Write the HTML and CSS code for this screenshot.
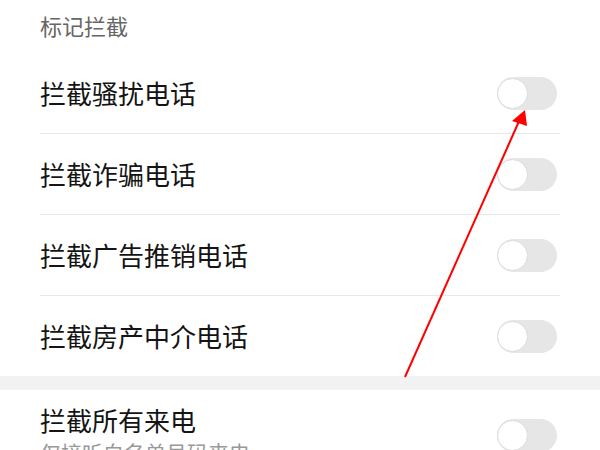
FILE: index.html
```html
<!DOCTYPE html>
<html>
<head>
<meta charset="UTF-8">
<title>标记拦截</title>
<link rel="stylesheet" href="styles.css">
</head>
<body>
<div class="page">
	<div class="section-title">标记拦截</div>
	<ul class="list">
		<li class="item">
			<span class="label">拦截骚扰电话</span>
			<span class="switch"><span class="knob"></span></span>
		</li>
		<li class="item">
			<span class="label">拦截诈骗电话</span>
			<span class="switch"><span class="knob"></span></span>
		</li>
		<li class="item">
			<span class="label">拦截广告推销电话</span>
			<span class="switch"><span class="knob"></span></span>
		</li>
		<li class="item">
			<span class="label">拦截房产中介电话</span>
			<span class="switch"><span class="knob"></span></span>
		</li>
	</ul>
	<div class="gap"></div>
	<ul class="list">
		<li class="item two-line">
			<div>
				<div class="label">拦截所有来电</div>
				<div class="sub">仅接听白名单号码来电</div>
			</div>
			<span class="switch"><span class="knob"></span></span>
		</li>
	</ul>

	<!-- 标注箭头 -->
	<svg class="arrow" width="600" height="450" viewBox="0 0 600 450">
		<line x1="405" y1="377" x2="520" y2="119" stroke="#ff0000" stroke-width="2"/>
		<polygon points="525,110 512,121 527,126" fill="#ff0000"/>
	</svg>
</div>
</body>
</html>
```

FILE: styles.css
```css
body{
	margin:0;
	background:#fff;
	font-family:"Noto Sans CJK SC","Noto Sans",sans-serif;
	color:#141414;
}
.page{
	position:relative;
	width:600px;
	height:450px;
	overflow:hidden;
}
.section-title{
	height:53px;
	line-height:50px;
	padding:0 40px;
	font-size:22px;
	color:#666;
}
.list{
	list-style:none;
	margin:0;
	padding:0;
}
.item{
	display:flex;
	align-items:center;
	justify-content:space-between;
	height:80px;
	margin:0 40px;
	border-bottom:1px solid #e9e9e9;
}
.item:last-child{
	border-bottom:none;
}
.label{
	font-size:26px;
	line-height:34px;
}
.item.two-line{
	height:auto;
	padding:13px 0 17px;
}
.sub{
	font-size:21px;
	line-height:30px;
	color:#999;
}
.switch{
	position:relative;
	width:60px;
	height:33px;
	margin-right:3px;
	border-radius:17px;
	background:#e6e6e6;
}
.knob{
	position:absolute;
	left:0;
	top:1px;
	width:29px;
	height:29px;
	border-radius:50%;
	background:#fff;
	border:1px solid #dcdcdc;
}
.gap{
	height:14px;
	background:#f2f2f2;
}
.arrow{
	position:absolute;
	left:0;
	top:0;
	pointer-events:none;
}
```
